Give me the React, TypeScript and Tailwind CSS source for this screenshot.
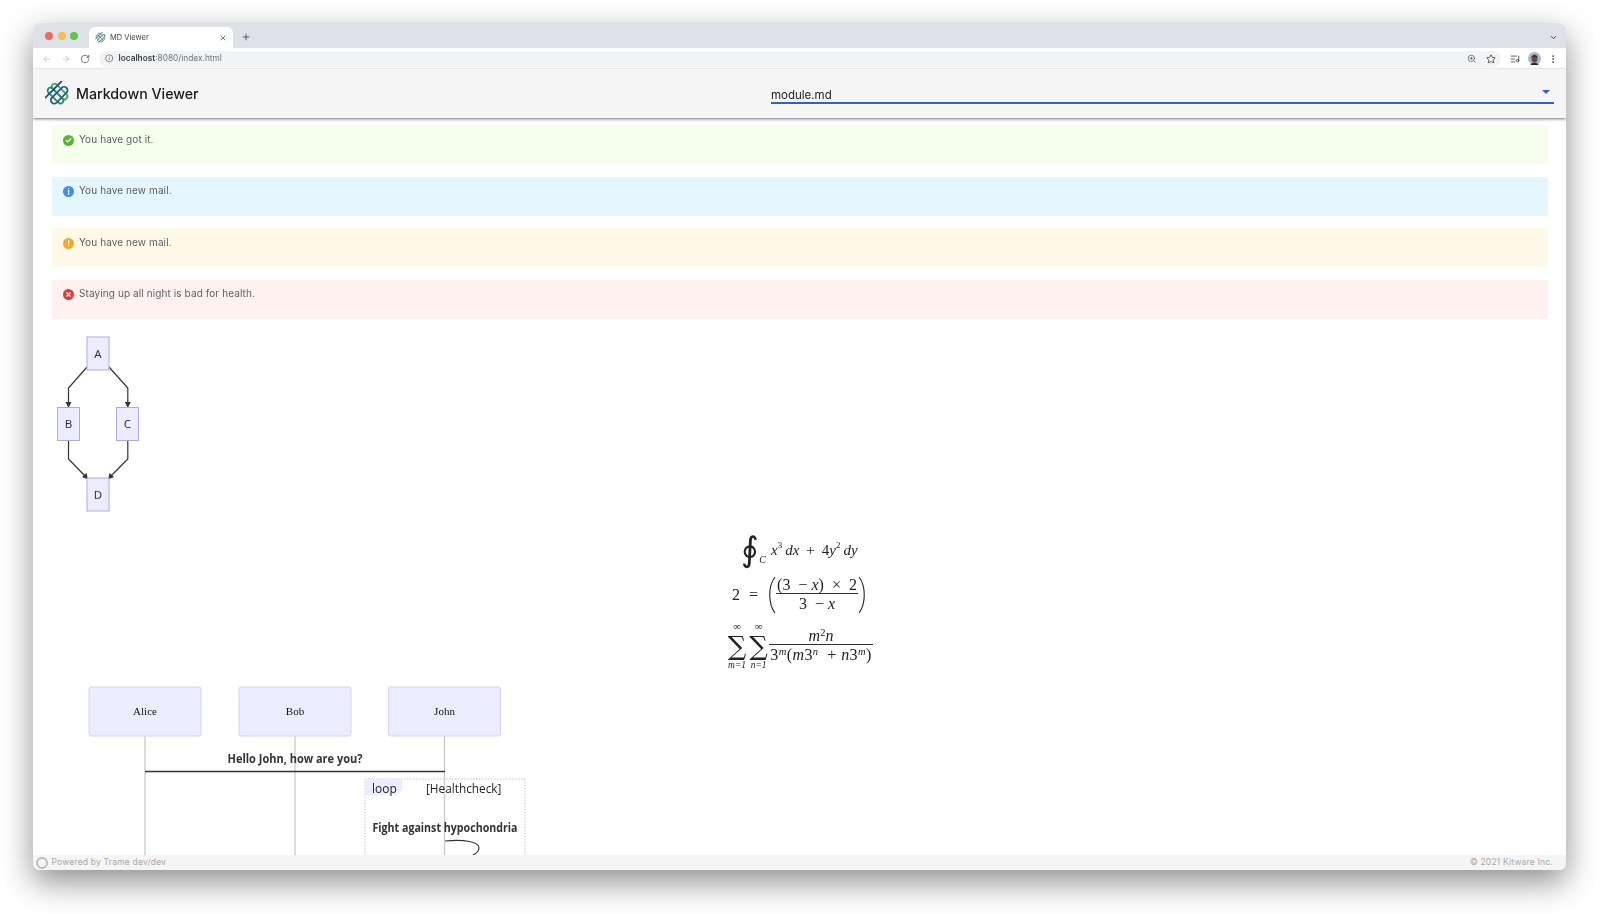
import { ArrowLeft, ArrowRight, RotateCw, Info, ZoomIn, Star, ListMusic, EllipsisVertical, ChevronDown, Plus, X, Check } from "lucide-react";

const ui = "font-['Inter',sans-serif]";
const serif = "font-['Liberation_Serif',serif]";

function Logo({ size }: { size: number }) {
    return (
        <svg width={size} height={size} viewBox="0 0 24 24" fill="none" strokeLinecap="round">
            <g transform="rotate(45 12 12)" strokeWidth="1.7">
                <rect x="2.5" y="6.5" width="19" height="5.5" rx="2.7" stroke="#4aa564" />
                <rect x="2.5" y="12" width="19" height="5.5" rx="2.7" stroke="#2c8a6c" />
                <path d="M6.5 1V23" stroke="#1c4c8c" />
                <rect x="11" y="2" width="6.5" height="20" rx="3.2" stroke="#1f5f8f" />
            </g>
        </svg>
    );
}

function BrowserChrome() {
    return (
        <>
            <div className="h-[25px] shrink-0 bg-[#dee1e6] flex items-end pl-[12px] pr-[8px]">
                <div className="flex items-center gap-[4.5px] self-center">
                    <span className="w-[8px] h-[8px] rounded-full bg-[#ec6a5e]" />
                    <span className="w-[8px] h-[8px] rounded-full bg-[#f4bf4f]" />
                    <span className="w-[8px] h-[8px] rounded-full bg-[#61c554]" />
                </div>
                <div className={`ml-[11px] w-[144px] h-[21px] bg-white rounded-t-[6px] flex items-center pl-[6px] pr-[6px] ${ui}`}>
                    <Logo size={11} />
                    <span className="ml-[4px] text-[7.5px] text-[#45494d] flex-1">MD Viewer</span>
                    <X size={8} strokeWidth={2} className="text-[#3c4043]" />
                </div>
                <Plus size={10} strokeWidth={2} className="ml-[8px] mb-[6px] text-[#3c4043]" />
                <div className="flex-1" />
                <ChevronDown size={9} strokeWidth={2.5} className="mb-[6px] text-[#3c4043]" />
            </div>
            <div className="h-[21px] shrink-0 bg-white flex items-center pl-[9px] pr-[8px] text-[#5f6368]">
                <ArrowLeft size={10} className="text-[#c0c3c7]" />
                <ArrowRight size={10} className="ml-[9px] text-[#c0c3c7]" />
                <RotateCw size={10} className="ml-[9px]" />
                <div className={`ml-[9px] h-[16px] flex-1 rounded-full bg-[#f1f3f4] flex items-center pl-[6px] pr-[5px] ${ui}`}>
                    <Info size={8.5} />
                    <span className="ml-[5px] text-[8.3px]">
                        <span className="font-semibold text-[#3c4043]">localhost</span>
                        <span className="text-[#70757a]">:8080/index.html</span>
                    </span>
                    <div className="flex-1" />
                    <ZoomIn size={9.5} />
                    <Star size={10} className="ml-[9px] text-[#3c4043]" />
                </div>
                <ListMusic size={10} className="ml-[9px] text-[#3c4043]" />
                <svg width="13" height="13" viewBox="0 0 13 13" className="ml-[8px]">
                    <circle cx="6.5" cy="6.5" r="6.5" fill="#a9b6cc" />
                    <ellipse cx="6.5" cy="6.5" rx="3" ry="4" fill="#6a4a3c" />
                    <path d="M3 6C3 2.6 10 2.6 10 6L8.5 4.5H4.5Z" fill="#1d1a1a" />
                    <path d="M2.5 13C3 10 10 10 10.5 13Z" fill="#26262b" />
                </svg>
                <EllipsisVertical size={10} className="ml-[7.5px] text-[#3c4043]" />
            </div>
        </>
    );
}

function Alert({ tone, icon, text }: { tone: string; icon: React.ReactNode; text: string }) {
    return (
        <div className={`h-[39px] rounded-[2px] pl-[11px] pt-[7.5px] flex items-start gap-[5px] ${tone}`}>
            {icon}
            <span className="text-[10px] leading-[13px] tracking-[0.1px] text-[#5c5f63]">{text}</span>
        </div>
    );
}

function Dot({ color, children }: { color: string; children: React.ReactNode }) {
    return (
        <span className={`mt-[2px] w-[11px] h-[11px] rounded-full flex items-center justify-center text-white ${color}`}>
            {children}
        </span>
    );
}

function FlowChart() {
    const boxes = [
        { x: 87, y: 337, w: 22, label: "A" },
        { x: 57.5, y: 407.5, w: 22, label: "B" },
        { x: 116.5, y: 407.5, w: 22, label: "C" },
        { x: 87, y: 478, w: 22, label: "D" },
    ];
    return (
        <svg viewBox="52 330 100 190" className="mt-[11px] ml-[19px] w-[100px] h-[190px] block shrink-0">
            <g fill="none" stroke="#333" strokeWidth="1.2">
                <path d="M87 367L68.5 388V403" />
                <path d="M109 367L127.8 388V403" />
                <path d="M68.5 440V459L85 476" />
                <path d="M127.8 440V459L111 476" />
            </g>
            <g fill="#333">
                <path d="M65.5 402H71.5L68.5 408Z" />
                <path d="M124.8 402H130.8L127.8 408Z" />
                <path d="M82 477L86.5 473L88 479.5Z" />
                <path d="M114 477L109.5 473L108 479.5Z" />
            </g>
            {boxes.map((b) => (
                <g key={b.label}>
                    <rect x={b.x} y={b.y} width={b.w} height="33" fill="#ececff" stroke="#b5a7e0" />
                    <text
                        x={b.x + b.w / 2}
                        y={b.y + 20.5}
                        textAnchor="middle"
                        fontSize="11.5"
                        fontFamily="Noto Sans, sans-serif"
                        fill="#333"
                    >
                        {b.label}
                    </text>
                </g>
            ))}
        </svg>
    );
}

function Frac({ top, bottom }: { top: React.ReactNode; bottom: React.ReactNode }) {
    return (
        <span className="inline-flex flex-col items-center">
            <span className="px-[1px] leading-[17px]">{top}</span>
            <span className="w-full px-[1px] pt-[1px] leading-[18px] text-center border-t border-[#333]">{bottom}</span>
        </span>
    );
}

function Sum({ from }: { from: string }) {
    return (
        <span className="inline-flex flex-col items-center w-[21.5px]">
            <span className="text-[11px] leading-[11px]">∞</span>
            <span className="font-['DejaVu_Serif',serif] text-[26px] leading-[28px] font-extralight">∑</span>
            <span className="text-[9.5px] leading-[11px] italic whitespace-nowrap">{from}</span>
        </span>
    );
}

function Paren({ flip }: { flip?: boolean }) {
    return (
        <svg width="9" height="38" viewBox="0 0 9 38" fill="none" className={flip ? "-scale-x-100" : ""}>
            <path d="M8 1C1 10 1 28 8 37" stroke="#222" strokeWidth="1.1" />
        </svg>
    );
}

function MathBlock() {
    return (
        <div className={`mt-[10px] flex flex-col items-center shrink-0 text-[16px] text-[#222] ${serif}`}>
            <div className="h-[40px] flex items-center text-[15px]">
                <span className="text-[34px] leading-[36px]">∮</span>
                <span className="italic text-[10px] self-end mb-[3px] mr-[5px]">C</span>
                <span className="italic">x</span>
                <sup className="text-[9px] top-[-5px]">3</sup>
                <span className="italic ml-[3px]">dx</span>
                <span className="mx-[7px]">+</span>
                <span>4</span>
                <span className="italic">y</span>
                <sup className="text-[9px] top-[-5px]">2</sup>
                <span className="italic ml-[3px]">dy</span>
            </div>
            <div className="mt-[5px] h-[40px] flex items-center">
                <span>2</span>
                <span className="mx-[9px]">=</span>
                <Paren />
                <Frac
                    top={<span>(3 &nbsp;− <i>x</i>) &nbsp;× &nbsp;2</span>}
                    bottom={<span>3 &nbsp;− <i>x</i></span>}
                />
                <Paren flip />
            </div>
            <div className="mt-[5px] h-[52px] flex items-center">
                <Sum from="m=1" />
                <Sum from="n=1" />
                <Frac
                    top={<span><i>m</i><sup className="text-[10.5px] top-[-5px]">2</sup><i>n</i></span>}
                    bottom={
                        <span className="tracking-[0.4px]">
                            3<sup className="text-[10.5px] top-[-5px] italic">m</sup>(<i>m</i>3<sup className="text-[10.5px] top-[-5px] italic">n</sup> &nbsp;+ <i>n</i>3<sup className="text-[10.5px] top-[-5px] italic">m</sup>)
                        </span>
                    }
                />
            </div>
        </div>
    );
}

function SequenceDiagram() {
    const actors = [
        { x: 89, name: "Alice" },
        { x: 239, name: "Bob" },
        { x: 388.5, name: "John" },
    ];
    return (
        <svg viewBox="52 680 500 190" className="mt-[8px] ml-[19px] w-[500px] h-[190px] block shrink-0">
            {actors.map((a) => (
                <g key={a.name}>
                    <line x1={a.x + 56} y1="736" x2={a.x + 56} y2="870" stroke="#c8c8c8" strokeWidth="1.3" />
                    <rect x={a.x} y="687" width="112" height="49" rx="2" fill="#ececff" stroke="#d8d2f2" />
                    <text
                        x={a.x + 56}
                        y="715"
                        textAnchor="middle"
                        fontSize="11"
                        fontFamily="Liberation Serif, serif"
                        fill="#111"
                    >
                        {a.name}
                    </text>
                </g>
            ))}
            <text
                x="227.5"
                y="763"
                fontSize="12.5"
                fontWeight="700"
                fontFamily="Open Sans, sans-serif"
                fill="#333"
                textLength="135"
                lengthAdjust="spacingAndGlyphs"
            >
                Hello John, how are you?
            </text>
            <line x1="145" y1="771.5" x2="445" y2="771.5" stroke="#333" strokeWidth="1.3" />
            <path d="M365 779H525M365 779V870M525 779V870" fill="none" stroke="#c4c0d4" strokeDasharray="1.5 1.5" />
            <path d="M365 779H402.5V789L397 795H365Z" fill="#ececff" />
            <text x="372" y="793" fontSize="12" fontFamily="Open Sans, sans-serif" fill="#222">loop</text>
            <text x="426" y="793" fontSize="11.8" fontFamily="Open Sans, sans-serif" fill="#222">[Healthcheck]</text>
            <text
                x="372.5"
                y="832"
                fontSize="12.5"
                fontWeight="700"
                fontFamily="Open Sans, sans-serif"
                fill="#333"
                textLength="145"
                lengthAdjust="spacingAndGlyphs"
            >
                Fight against hypochondria
            </text>
            <path d="M445 841C465 839 479 842 479 848C479 852 474 855 469 857" fill="none" stroke="#333" strokeWidth="1.1" />
        </svg>
    );
}

export default function App() {
    return (
        <div className="w-[1600px] h-[914px] bg-white pt-[23px] pl-[33px] overflow-hidden">
            <div className={`w-[1533px] h-[847px] rounded-[7px] overflow-hidden bg-white flex flex-col shadow-[0_12px_32px_rgba(0,0,0,0.45)] blur-[0.35px] ${ui}`}>
                <BrowserChrome />
                <header className="h-[49px] shrink-0 bg-[#f5f5f5] flex items-center pl-[12px] pr-[12px] shadow-[0_1px_3px_rgba(0,0,0,0.55)] z-10">
                    <Logo size={25} />
                    <span className="ml-[6px] text-[14.2px] font-medium text-[#1a1a1a]">Markdown Viewer</span>
                    <div className="ml-auto w-[783px] h-[35px] self-start flex items-end justify-between border-b-2 border-[#2d66b3]">
                        <span className="text-[11.5px] leading-[14px] text-[#222]">module.md</span>
                        <span className="mr-[4px] mb-[8px] w-0 h-0 border-x-[4px] border-x-transparent border-t-[4px] border-t-[#2d66b3]" />
                    </div>
                </header>
                <main className="flex-1 min-h-0 overflow-hidden flex flex-col">
                    <div className="mt-[7px] ml-[19px] mr-[18px] shrink-0 flex flex-col gap-[12.67px]">
                        <Alert
                            tone="bg-[#f6ffed]"
                            icon={<Dot color="bg-[#5cb531]"><Check size={7} strokeWidth={4} /></Dot>}
                            text="You have got it."
                        />
                        <Alert
                            tone="bg-[#e6f6ff]"
                            icon={<Dot color="bg-[#3f8cf2]"><span className="text-[8px] leading-none font-bold">i</span></Dot>}
                            text="You have new mail."
                        />
                        <Alert
                            tone="bg-[#fff9e8]"
                            icon={<Dot color="bg-[#f0a930]"><span className="text-[8px] leading-none font-bold">!</span></Dot>}
                            text="You have new mail."
                        />
                        <Alert
                            tone="bg-[#fff1f0]"
                            icon={<Dot color="bg-[#e03a3a]"><X size={7} strokeWidth={4} /></Dot>}
                            text="Staying up all night is bad for health."
                        />
                    </div>
                    <FlowChart />
                    <MathBlock />
                    <SequenceDiagram />
                </main>
                <footer className="h-[15px] shrink-0 bg-[#f5f5f5] flex items-center justify-between pl-[3px] pr-[13px] text-[8.5px] tracking-[0.2px] text-[#a8a8a8]">
                    <span className="flex items-center gap-[3.5px]">
                        <span className="w-[12px] h-[12px] rounded-full border-2 border-[#bdbdbd]" />
                        Powered by Trame dev/dev
                    </span>
                    <span>© 2021 Kitware Inc.</span>
                </footer>
            </div>
        </div>
    );
}
